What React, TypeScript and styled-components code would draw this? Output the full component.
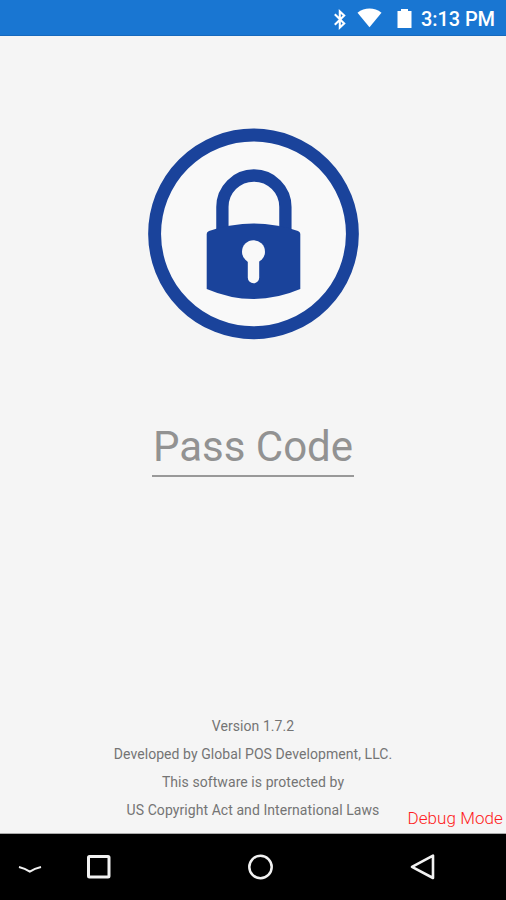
import React from "react";
import styled, { createGlobalStyle } from "styled-components";

const GlobalStyle = createGlobalStyle`
  * { box-sizing: border-box; }
  body { margin: 0; background: #f5f5f5; font-family: Roboto, "Liberation Sans", sans-serif; }
`;

const Screen = styled.div`
  width: 506px;
  height: 900px;
  display: flex;
  flex-direction: column;
  overflow: hidden;
  background: #f5f5f5;
`;

const StatusBar = styled.header`
  flex: none;
  height: 36px;
  padding: 3px 11px 0 0;
  display: flex;
  align-items: center;
  justify-content: flex-end;
  background: #1976d2;
  border-bottom: 1px solid #1669bd;
  color: #fff;
`;

const StatusIcons = styled.svg`
  flex: none;
  width: 84px;
  height: 24px;
  margin-right: 6px;
`;

const Clock = styled.span`
  font-size: 20px;
  line-height: 24px;
  font-weight: 500;
  letter-spacing: -0.1px;
  white-space: nowrap;
`;

const Content = styled.main`
  flex: none;
  height: 798px;
  display: flex;
  flex-direction: column;
  align-items: center;
  border-bottom: 1px solid #aaa;
`;

const LockLogo = styled.svg`
  flex: none;
  width: 212px;
  height: 212px;
  margin-top: 92px;
`;

const PassCodeInput = styled.input`
  flex: none;
  width: 202px;
  height: 61px;
  margin-top: 76px;
  padding: 1px 0 0;
  border: 0;
  border-bottom: 2px solid #999;
  border-radius: 0;
  background: transparent;
  font: 400 42px/58px Roboto, sans-serif;
  text-align: center;
  outline: none;
  color: #555;
  &::placeholder { color: #929292; opacity: 1; }
`;

const Footer = styled.footer`
  width: 100%;
  margin-top: auto;
  display: grid;
  grid-template-columns: 1fr auto 1fr;
  align-items: end;
`;

const Notice = styled.div`
  grid-column: 2;
  display: flex;
  flex-direction: column;
  align-items: center;
  padding-bottom: 9px;
`;

const NoticeLine = styled.p`
  margin: 0;
  font-size: 14px;
  line-height: 28px;
  letter-spacing: 0.07px;
  white-space: nowrap;
  color: #747474;
`;

const DebugLabel = styled.span`
  justify-self: end;
  padding: 0 3px 4px 0;
  font-size: 17px;
  line-height: 22px;
  font-weight: 300;
  letter-spacing: 0.08px;
  white-space: nowrap;
  color: #ff1a20;
`;

const NavBar = styled.nav`
  flex: 1;
  display: flex;
  align-items: center;
  background: #000;
`;

const NavButton = styled.button<{ $gap: number }>`
  flex: none;
  width: 32px;
  height: 32px;
  margin: 0 0 0 ${(p) => p.$gap}px;
  padding: 0;
  border: 0;
  background: none;
  svg { display: block; fill: none; stroke: #f2f2f2; }
`;

export default function App() {
  return (
    <>
      <GlobalStyle />
      <Screen>
        <StatusBar>
          <StatusIcons viewBox="0 0 84 24" fill="#fff">
            <path d="M3.8 7.2 L13.2 16.4 L8.8 20.6 V4.4 L13.2 8.6 L3.8 17.8" fill="none" stroke="#fff" strokeWidth="2.1" />
            <path d="M26.5 5.8 C33.5 .2 43.5 .2 50.5 5.8 L38.5 20.2 Z" />
            <path d="M70 2 H77 V4 H80.5 V21 H66.5 V4 H70 Z" />
          </StatusIcons>
          <Clock>3:13 PM</Clock>
        </StatusBar>
        <Content>
          <LockLogo viewBox="147 128 212 212">
            <circle cx="253.5" cy="233.9" r="98.9" fill="#f9f9f9" stroke="#1a439b" strokeWidth="12.9" />
            <path d="M222.4 236 V207 A31.5 31.5 0 0 1 285.4 207 V236" fill="none" stroke="#1a439b" strokeWidth="12.3" />
            <path d="M206.7 234 Q206.7 232 209 231 Q253.5 216 298 231 Q300.3 232 300.3 234 V289 Q253.5 309 206.7 289 Z" fill="#1a439b" />
            <circle cx="253.5" cy="251.7" r="11.5" fill="#f9f9f9" />
            <path d="M253.5 254 V277.5" stroke="#f9f9f9" strokeWidth="11.4" strokeLinecap="round" />
          </LockLogo>
          <PassCodeInput placeholder="Pass Code" aria-label="Pass Code" />
          <Footer>
            <Notice>
              <NoticeLine>Version 1.7.2</NoticeLine>
              <NoticeLine>Developed by Global POS Development, LLC.</NoticeLine>
              <NoticeLine>This software is protected by</NoticeLine>
              <NoticeLine>US Copyright Act and International Laws</NoticeLine>
            </Notice>
            <DebugLabel>Debug Mode</DebugLabel>
          </Footer>
        </Content>
        <NavBar>
          <NavButton $gap={14} aria-label="Hide">
            <svg width="32" height="32"><path d="M5 16 Q11 17.5 15.8 20.6 Q20.6 17.5 27 16" strokeWidth="2" /></svg>
          </NavButton>
          <NavButton $gap={37} aria-label="Recents">
            <svg width="32" height="32"><rect x="5.5" y="5.5" width="20.5" height="20.5" rx="1" strokeWidth="3" /></svg>
          </NavButton>
          <NavButton $gap={130} aria-label="Home">
            <svg width="32" height="32"><circle cx="15.5" cy="16" r="11.2" strokeWidth="2.5" /></svg>
          </NavButton>
          <NavButton $gap={130} aria-label="Back">
            <svg width="32" height="32"><path d="M5 15.8 L26 4.7 V27 Z" strokeWidth="2.6" strokeLinejoin="round" /></svg>
          </NavButton>
        </NavBar>
      </Screen>
    </>
  );
}
